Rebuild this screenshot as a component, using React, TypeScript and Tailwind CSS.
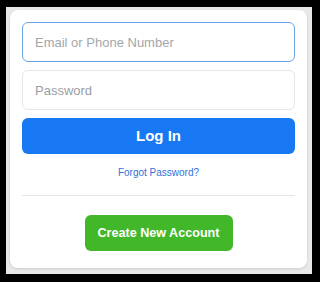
const font = { fontFamily: '"Liberation Sans", Arial, sans-serif' };

export default function App() {
  return (
    <div className="w-[320px] h-[282px] bg-black pt-[7px] pl-[6px]" style={font}>
      <div className="w-[306px] bg-[#e9e9e9] pt-[3px] pl-[4px] pb-[6px]">
        <div className="w-[297px] h-[258px] bg-white rounded-lg shadow-[0_1px_3px_rgba(0,0,0,0.12)] px-3 pt-3 flex flex-col">
          <input
            className="h-10 w-full rounded-md border border-[#6aa3e6] px-3 text-[13px] text-[#1c1e21] placeholder:text-[#a3a6ab] outline-none"
            placeholder="Email or Phone Number"
          />
          <input
            type="password"
            className="mt-2 h-10 w-full rounded-md border border-[#e4e6e9] px-3 text-[13px] text-[#1c1e21] placeholder:text-[#9a9ea4] outline-none"
            placeholder="Password"
          />
          <button className="mt-2 h-9 w-full rounded-md bg-[#1877f2] text-white font-bold text-[15px]">
            Log In
          </button>
          <a className="mt-3 block text-center text-[10px] leading-[14px] text-[#2e73d9]">Forgot Password?</a>
          <div className="mt-[15px] h-px w-full bg-[#e2e4e7]" />
          <div className="mt-[19px] flex justify-center">
            <button className="h-9 w-[148px] rounded-md bg-[#42b72a] text-white font-bold text-[12.6px]">
              Create New Account
            </button>
          </div>
        </div>
      </div>
    </div>
  );
}
